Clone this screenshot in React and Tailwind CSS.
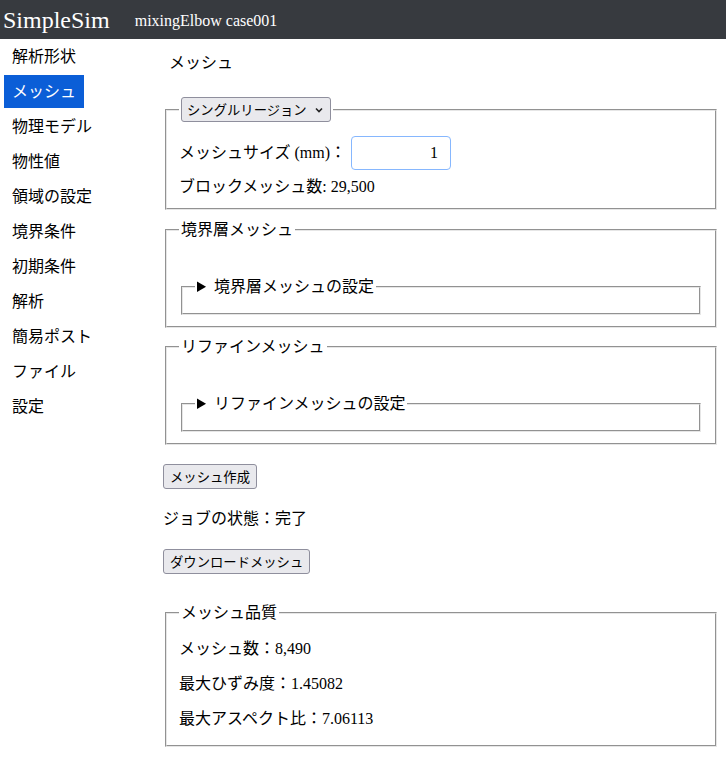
import { useState } from 'react';

const menu = ['解析形状', 'メッシュ', '物理モデル', '物性値', '領域の設定', '境界条件', '初期条件', '解析', '簡易ポスト', 'ファイル', '設定'];

const font = 'font-["Liberation_Serif","Noto_Sans_CJK_JP",serif]';
const fieldset = 'mx-[2px] border-2 [border-style:groove] border-[#e6e6e6] px-[12px] pt-[5px]';
const btn = 'h-[25px] px-[6px] rounded-[3px] border border-[#8f8f9d] bg-[#e9e9ed] text-[13.33px] leading-[23px] font-["Noto_Sans_CJK_JP",sans-serif] text-black';

function SubSection({ title }) {
  return (
    <fieldset className={`${fieldset} pb-[10px] mt-[30px]`}>
      <legend className="px-[2px] leading-[22px]">
        <details>
          <summary className="cursor-pointer">{title}</summary>
        </details>
      </legend>
    </fieldset>
  );
}

export default function App() {
  const [active] = useState('メッシュ');

  return (
    <div className={`min-h-screen bg-white text-black ${font}`}>
      {/* ヘッダー */}
      <div className="h-[39px] bg-[#373a3f] text-white flex items-center">
        <span className="pl-[3px] text-[24px] leading-[30px]">SimpleSim</span>
        <span className="ml-[25px] text-[16px] leading-[20px] pt-[2px]">mixingElbow case001</span>
      </div>

      <div className="flex">
        {/* サイドバー */}
        <div className="w-[163px] shrink-0 pl-[4px] pt-[1px]">
          {menu.map((m) => (
            <div
              key={m}
              className={`h-[33px] mb-[2px] px-[8px] flex items-center text-[16px] w-fit ${
                m === active ? 'bg-[#0b5ed7] text-white' : ''
              }`}
            >
              {m}
            </div>
          ))}
        </div>

        {/* メイン */}
        <div className="flex-1 pr-[7px] text-[16px]">
          <div className="pl-[6px] pt-[13px] leading-[22px]">メッシュ</div>

          <fieldset className={`${fieldset} pb-[10px] mt-[23px]`}>
            <legend className="px-[2px]">
              <div className="h-[25px] w-[150px] rounded-[3px] border border-[#8f8f9d] bg-[#e9e9ed] flex items-center justify-between pl-[5px] pr-[6px] text-[13.33px] font-['Noto_Sans_CJK_JP',sans-serif]">
                <span>シングルリージョン</span>
                <svg width="10" height="10" viewBox="0 0 10 10" fill="none" stroke="#222" strokeWidth="1.6">
                  <path d="M2 3.5 L5 6.5 L8 3.5" />
                </svg>
              </div>
            </legend>
            <div className="mt-[9px] flex items-center h-[34px]">
              <span className="leading-[22px]">メッシュサイズ (mm)：</span>
              <input
                type="text"
                defaultValue="1"
                className="ml-[5px] h-[34px] w-[100px] rounded-[4px] border border-[#86b7fe] px-[12px] text-right text-[16px] outline-none"
              />
            </div>
            <div className="mt-[6px] leading-[22px]">ブロックメッシュ数: 29,500</div>
          </fieldset>

          <fieldset className={`${fieldset} pb-[11px] mt-[9px]`}>
            <legend className="px-[2px] leading-[22px]">境界層メッシュ</legend>
            <SubSection title="境界層メッシュの設定" />
          </fieldset>

          <fieldset className={`${fieldset} pb-[11px] mt-[8px]`}>
            <legend className="px-[2px] leading-[22px]">リファインメッシュ</legend>
            <SubSection title="リファインメッシュの設定" />
          </fieldset>

          <button className={`${btn} mt-[19px] block`}>メッシュ作成</button>
          <div className="mt-[19px] leading-[22px]">ジョブの状態：完了</div>
          <button className={`${btn} mt-[19px] block`}>ダウンロードメッシュ</button>

          <fieldset className={`${fieldset} pb-[10px] mt-[28px]`}>
            <legend className="px-[2px] leading-[22px]">メッシュ品質</legend>
            <div className="mt-[9px] leading-[22px]">メッシュ数：8,490</div>
            <div className="mt-[13px] leading-[22px]">最大ひずみ度：1.45082</div>
            <div className="mt-[13px] mb-[5px] leading-[22px]">最大アスペクト比：7.06113</div>
          </fieldset>
        </div>
      </div>
    </div>
  );
}
